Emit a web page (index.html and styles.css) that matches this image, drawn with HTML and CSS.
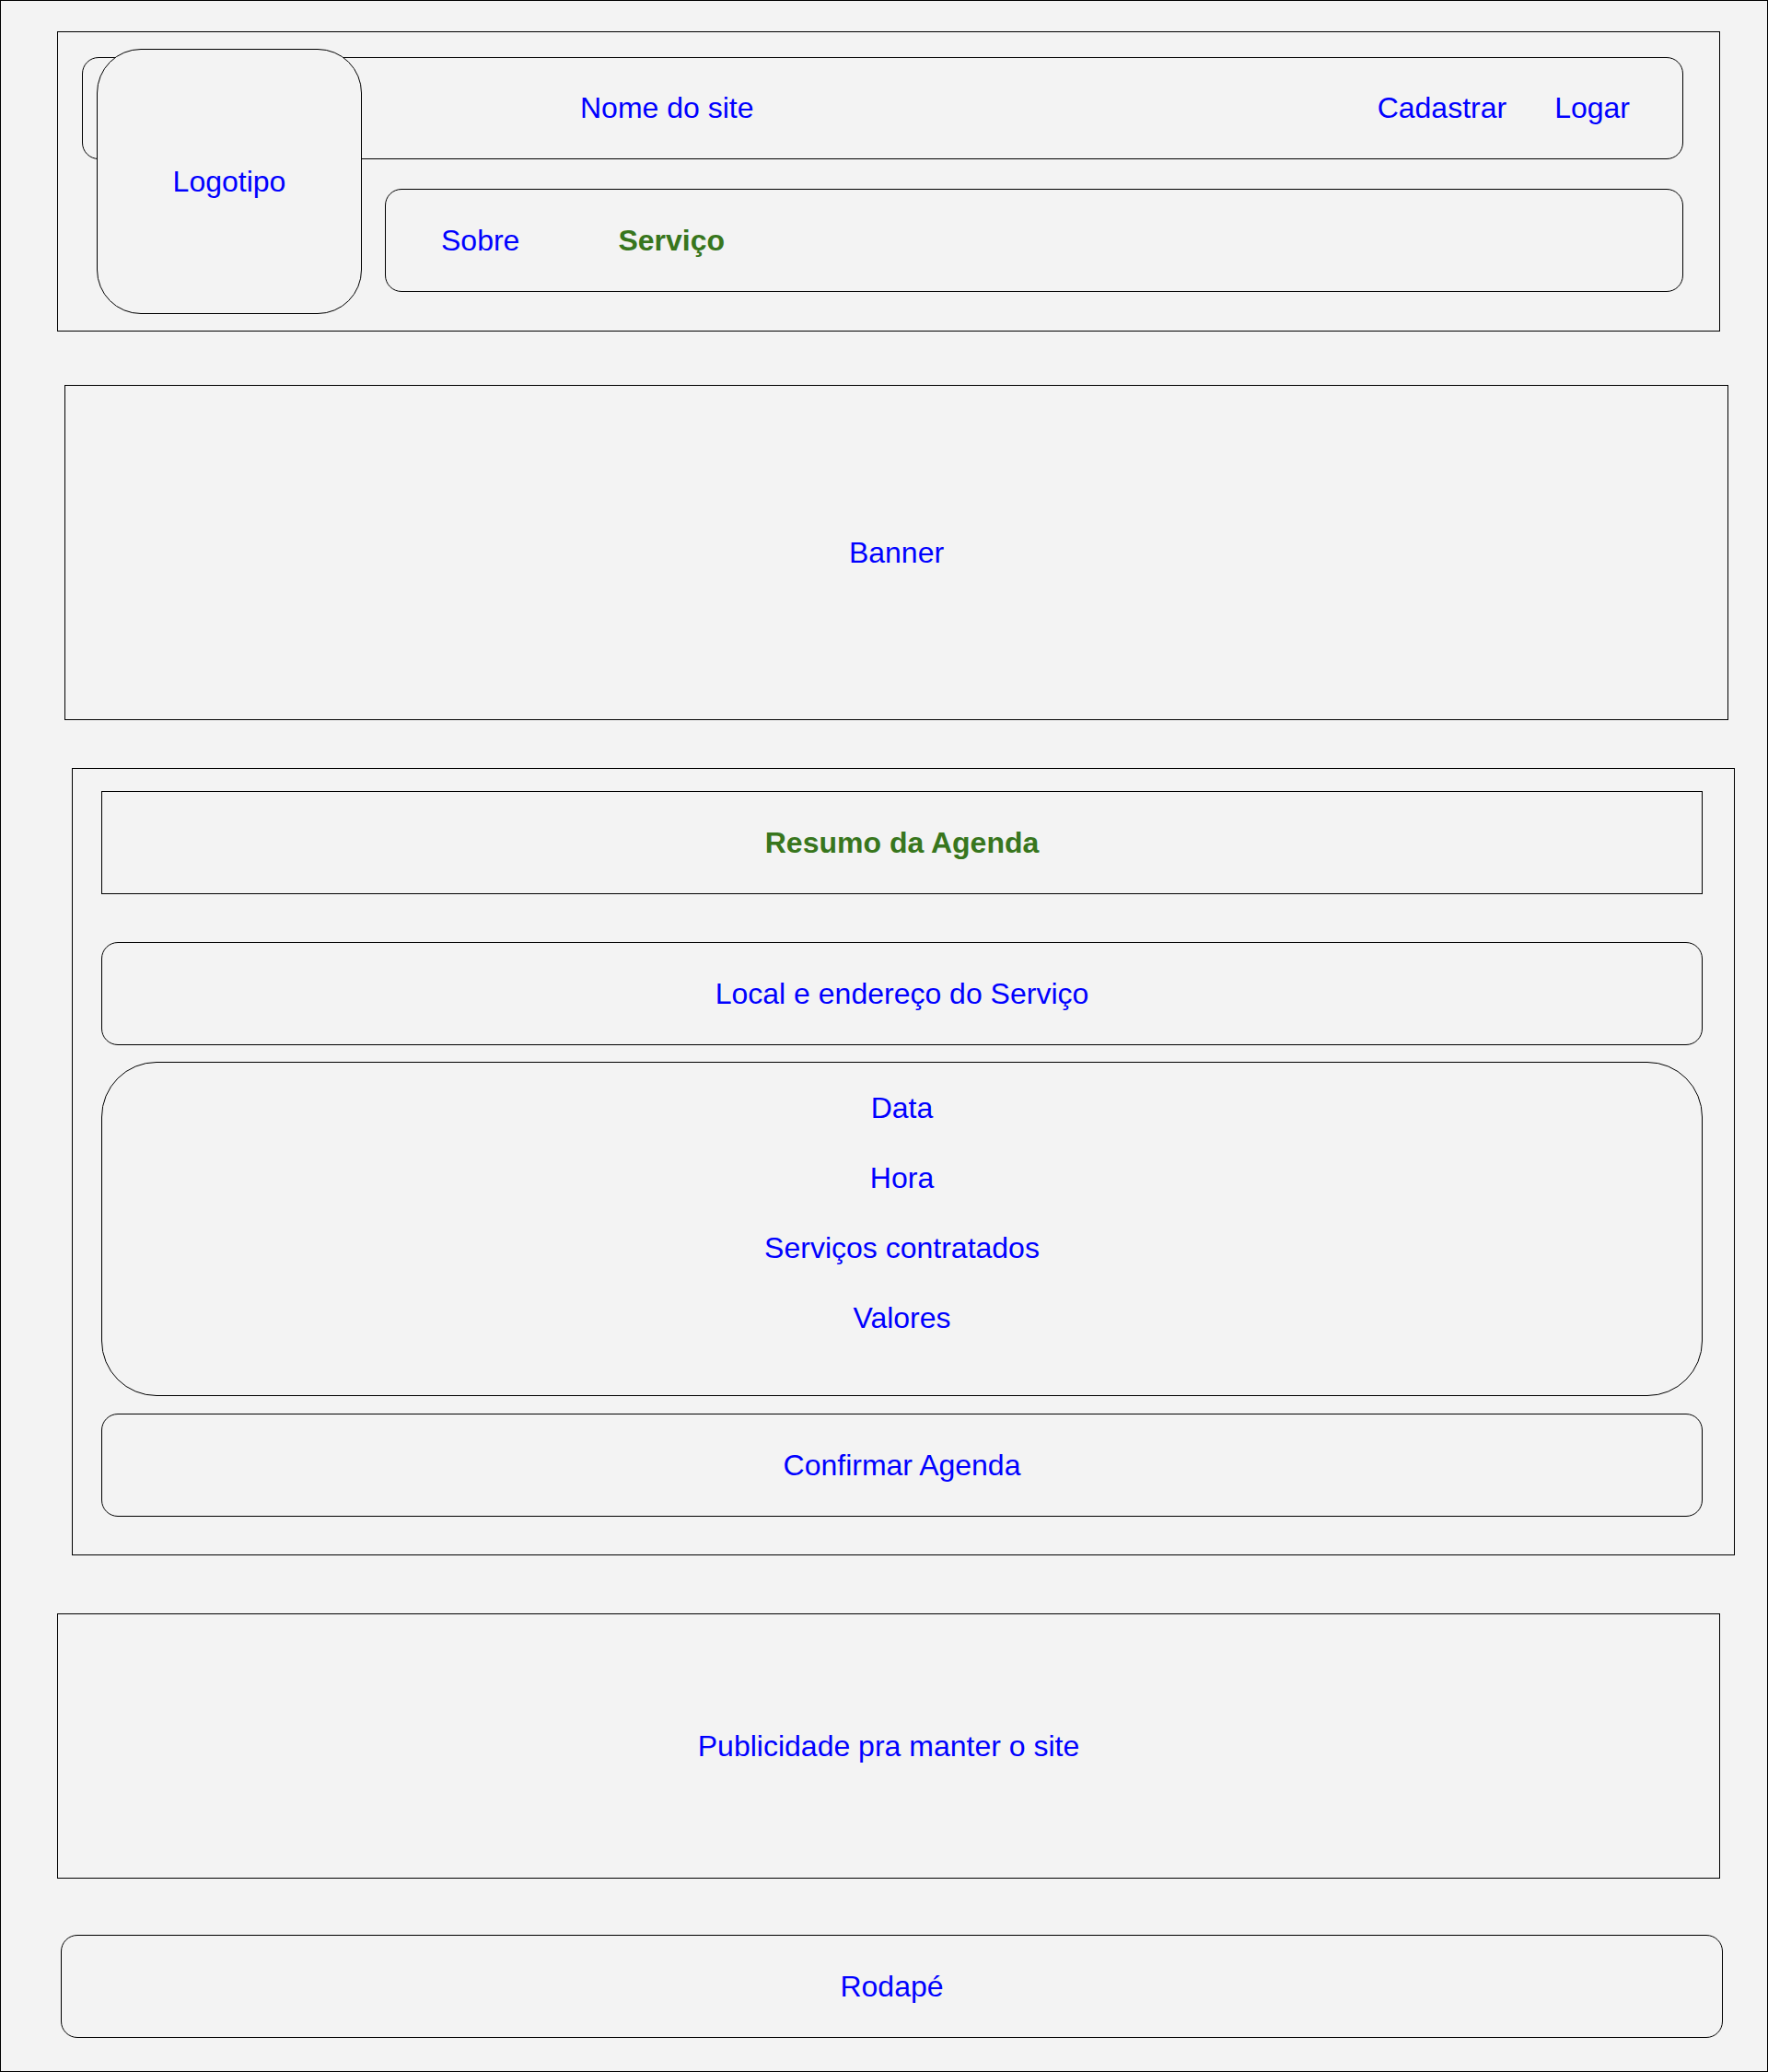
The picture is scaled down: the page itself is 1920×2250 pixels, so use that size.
FILE: index.html
```html
<!DOCTYPE html>
<html lang="pt-BR">
<head>
    <meta charset="UTF-8">
    <meta name="viewport" content="width=device-width, initial-scale=1.0">
    <title>Resumo da Agenda</title>
    <link rel="stylesheet" href="styles.css">
</head>
<body>
    <header class="header">
        <div class="logo">Logotipo</div>
        <div class="topbar">
            <span class="site-name">Nome do site</span>
            <nav class="account">
                <a href="#">Cadastrar</a>
                <a href="#">Logar</a>
            </nav>
        </div>
        <nav class="menu">
            <a href="#">Sobre</a>
            <a href="#" class="active">Serviço</a>
        </nav>
    </header>

    <section class="banner">Banner</section>

    <main class="agenda">
        <h2 class="agenda-title">Resumo da Agenda</h2>
        <div class="box">Local e endereço do Serviço</div>
        <div class="details">
            <span>Data</span>
            <span>Hora</span>
            <span>Serviços contratados</span>
            <span>Valores</span>
        </div>
        <button type="button" class="box confirm">Confirmar Agenda</button>
    </main>

    <aside class="ads">Publicidade pra manter o site</aside>

    <footer class="footer">Rodapé</footer>
</body>
</html>
```

FILE: styles.css
```css
* {
    box-sizing: border-box;
}

body {
    margin: 0;
    height: 2250px;
    border: 1px solid #000;
    background-color: #f3f3f3;
    font-family: "Liberation Sans", Arial, sans-serif;
    font-size: 32px;
    color: #0000ff;
}

a {
    color: #0000ff;
    text-decoration: none;
}

/* cabeçalho */
.header {
    position: relative;
    width: 1806px;
    height: 326px;
    margin: 33px 0 0 61px;
    padding: 27px 39px 0 26px;
    border: 1px solid #000;
    display: flex;
    flex-direction: column;
    align-items: flex-end;
    gap: 32px;
}

.logo {
    position: absolute;
    left: 42px;
    top: 18px;
    width: 288px;
    height: 288px;
    border: 1px solid #000;
    border-radius: 48px;
    background-color: #f3f3f3;
    display: flex;
    justify-content: center;
    align-items: center;
    z-index: 1;
}

.topbar {
    width: 100%;
    height: 111px;
    border: 1px solid #000;
    border-radius: 18px;
    display: flex;
    align-items: center;
    padding: 0 57px 0 540px;
}

.account {
    margin-left: auto;
    display: flex;
    gap: 52px;
}

.menu {
    width: 1410px;
    height: 112px;
    border: 1px solid #000;
    border-radius: 18px;
    display: flex;
    align-items: center;
    gap: 107px;
    padding-left: 60px;
}

.menu .active {
    color: #38761d;
    font-weight: bold;
}

/* banner */
.banner {
    width: 1807px;
    height: 364px;
    margin: 58px 0 0 69px;
    border: 1px solid #000;
    display: flex;
    justify-content: center;
    align-items: center;
}

/* agenda */
.agenda {
    width: 1806px;
    height: 855px;
    margin: 52px 0 0 77px;
    padding: 24px 34px 0 31px;
    border: 1px solid #000;
    display: flex;
    flex-direction: column;
}

.agenda-title {
    margin: 0 0 52px;
    height: 112px;
    border: 1px solid #000;
    font-size: 32px;
    color: #38761d;
    display: flex;
    justify-content: center;
    align-items: center;
}

.box {
    height: 112px;
    border: 1px solid #000;
    border-radius: 18px;
    display: flex;
    justify-content: center;
    align-items: center;
}

.details {
    height: 363px;
    margin: 18px 0 19px;
    padding-top: 11px;
    border: 1px solid #000;
    border-radius: 60px;
    display: flex;
    flex-direction: column;
    align-items: center;
    line-height: 76px;
}

.confirm {
    width: 100%;
    background: none;
    font-family: inherit;
    font-size: inherit;
    color: #0000ff;
    cursor: pointer;
}

/* publicidade e rodapé */
.ads {
    width: 1806px;
    height: 288px;
    margin: 63px 0 0 61px;
    border: 1px solid #000;
    display: flex;
    justify-content: center;
    align-items: center;
}

.footer {
    width: 1805px;
    height: 112px;
    margin: 61px 0 0 65px;
    border: 1px solid #000;
    border-radius: 18px;
    display: flex;
    justify-content: center;
    align-items: center;
}
```
